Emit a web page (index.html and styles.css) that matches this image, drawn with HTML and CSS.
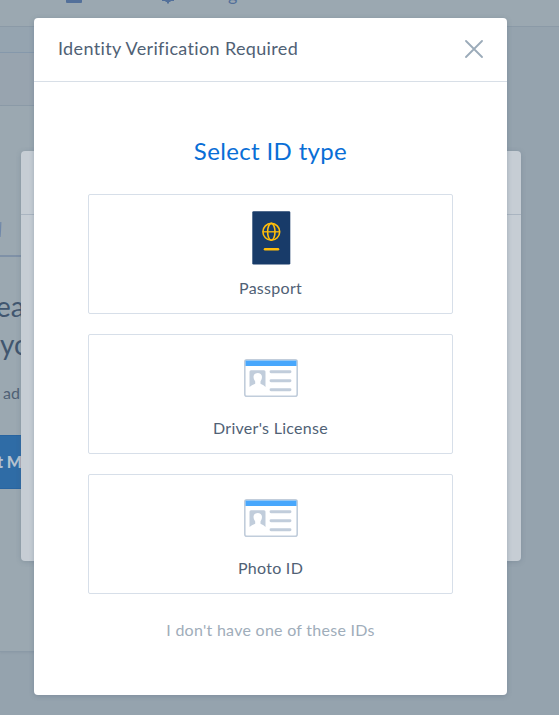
FILE: index.html
```html
<!DOCTYPE html>
<html lang="en">
<head>
<meta charset="utf-8">
<title>Identity Verification</title>
<link rel="stylesheet" href="styles.css">
</head>
<body>
<div class="page">
  <header class="topnav">
    <span class="nav-block"></span>
    <svg class="nav-gear" width="12" height="4" viewBox="0 0 12 4"><path d="M0 0h12v1H9L8 2H7v1.500H5V2H4L3 1H0z" fill="#53709a"/></svg>
    <span class="nav-text">g</span>
  </header>
  <div class="subbar"></div>
  <div class="gap"></div>
  <section class="promo">
    <div class="tab"><svg width="3" height="16" viewBox="0 0 3 16"><path d="M.8 0Q.5 10 0 15" stroke="#7088a9" stroke-width="1.200" fill="none"/></svg></div>
    <p class="big first">ea</p>
    <p class="big second">yo</p>
    <p class="small">ad</p>
    <div class="cta">t M</div>
  </section>
</div>
<div class="back-modal"><div class="back-head"></div></div>
<main class="modal">
  <header class="head">
    <h1>Identity Verification Required</h1>
    <svg class="close" width="18" height="18" viewBox="0 0 18 18"><path d="M1 1L17 17M17 1L1 17" stroke="#9babb9" stroke-width="1.800" stroke-linecap="round"/></svg>
  </header>
  <div class="body">
    <h2>Select ID type</h2>
    <button class="option">
      <svg class="passport" width="39" height="54" viewBox="0 0 39 54"><rect x=".3" y=".2" width="38" height="53.400" rx="1.300" fill="#183b69"/><g fill="none" stroke="#ffbd0a" stroke-width="1.600"><circle cx="19.300" cy="20.800" r="8.400"/><ellipse cx="19.300" cy="20.800" rx="3.700" ry="8.400"/><path d="M10.900 20.800h16.800" stroke-width="1.300"/><path d="M13 38.200h13" stroke-width="2.500" stroke-linecap="round"/></g></svg>
      <span>Passport</span>
    </button>
    <button class="option">
      <svg class="card" width="54" height="38" viewBox="0 0 54 38"><use href="#id-card"/></svg>
      <span>Driver's License</span>
    </button>
    <button class="option">
      <svg class="card" width="54" height="38" viewBox="0 0 54 38">
        <g id="id-card"><rect x=".8" y=".8" width="52.400" height="36.400" rx="2" fill="#fff" stroke="#c1cddb" stroke-width="1.600"/><path d="M1.500 1.500h51V7h-51z" fill="#48a7fc"/><path d="M7 11.200h13q1.500 0 1.500 1.500V28Q20 26 16.500 24.800V22.500Q18 20.500 18 18C18 12.500 9.500 12.500 9.500 18Q9.500 20.500 11.200 22.500V24.800Q7.500 26 5.500 28V12.700q0-1.500 1.500-1.500" fill="#c1cddb"/><path d="M27 12.700h19M27 21.700h19M27 30.700h19" stroke="#c1cddb" stroke-width="2.900" stroke-linecap="round"/></g>
      </svg>
      <span>Photo ID</span>
    </button>
    <a class="none">I don't have one of these IDs</a>
  </div>
</main>
</body>
</html>
```
FILE: styles.css
```css
* { box-sizing: border-box; }
body { margin: 0; width: 559px; height: 715px; overflow: hidden; position: relative; background: #95a3ae; font-family: Lato, "Liberation Sans", sans-serif; color: #506175; }
h1, h2, p { margin: 0; font-weight: 400; }
.page { height: 715px; overflow: hidden; }
.topnav { height: 27px; background: #9ba8b1; border-bottom: 1px solid #8b9aa7; display: flex; align-items: flex-start; padding-left: 66px; }
.nav-block { width: 16px; height: 3px; background: #53709a; border-radius: 0 0 1px 1px; }
.nav-gear { margin-left: 80px; }
.nav-text { margin: -17px 0 0 54px; font-size: 18px; line-height: 22px; color: #53709a; }
.subbar { height: 26px; width: 40px; background: #95a4b0; border-bottom: 1px solid #8598ab; }
.gap { height: 53px; width: 40px; background: #98a4af; border-bottom: 1px solid #8b9aa7; }
.promo { width: 40px; height: 546px; background: #9ba8b1; border-bottom: 1px solid #8b9aa7; overflow: hidden; white-space: nowrap; box-shadow: 0 1px 2px #8d9ba7; }
.tab { height: 151px; border-bottom: 2px solid #7f91a7; padding-top: 116px; }
.tab svg { display: block; }
.big { font-size: 28px; line-height: 38px; color: #41566f; }
.first { padding-top: 30px; margin-left: -4px; }
.second { margin-left: 0; }
.small { font-size: 16px; line-height: 20px; padding: 20px 0 0 3px; color: #506175; }
.cta { margin: 32px 0 0 -4px; height: 54px; background: #2f6ca6; border: 1px solid #2864a0; color: #b5c2cf; font-weight: 900; font-size: 16px; line-height: 52px; }
.back-modal { position: absolute; left: 21px; top: 151px; width: 500px; height: 410px; border-radius: 4px; background: #c6cdd4; box-shadow: 0 1px 5px rgba(70,90,110,.25); }
.back-head { height: 64px; border-bottom: 1px solid #aab5c1; }
.modal { position: absolute; left: 34px; top: 18px; width: 473px; height: 677px; background: #fff; border-radius: 4px; box-shadow: 0 1px 5px rgba(70,90,110,.3); }
.head { height: 64px; border-bottom: 1px solid #d8dfe7; padding: 0 24px; display: flex; align-items: center; justify-content: space-between; }
h1 { font-size: 18px; line-height: 24px; letter-spacing: .35px; margin-top: -3px; }
.close { margin-top: -2px; }
.body { padding: 53px 54px 0; display: flex; flex-direction: column; align-items: center; }
h2 { color: #096ed6; font-size: 24px; line-height: 32px; height: 59px; letter-spacing: .35px; }
.option { width: 365px; height: 120px; margin: 0 0 20px; padding: 0; border: 1px solid #d7dfe9; border-radius: 2px; background: #fff; display: flex; flex-direction: column; align-items: center; font: 16px/20px Lato, "Liberation Sans", sans-serif; letter-spacing: .28px; color: #506175; }
.passport { margin: 16px 0 13px 2px; }
.card { margin: 24px 0 21px; }
.none { color: #a0adba; font-size: 16px; line-height: 20px; letter-spacing: .27px; margin-top: 6px; }
```
